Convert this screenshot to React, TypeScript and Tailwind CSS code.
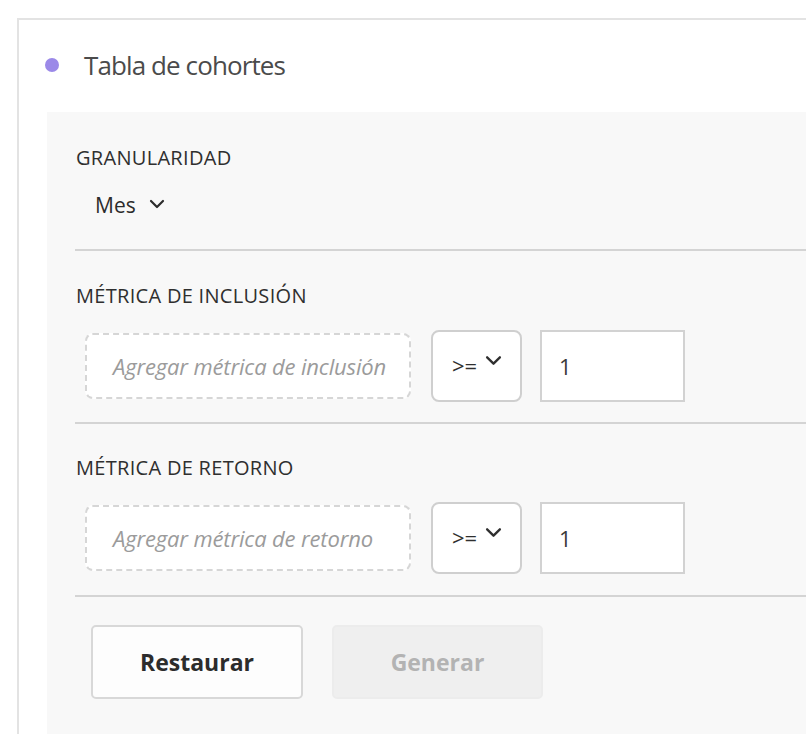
import { ReactNode } from 'react';

const FONT = { fontFamily: '"Open Sans", "Noto Sans", Arial, sans-serif' };

function Chevron({ className }: { className?: string }) {
    return (
        <svg className={className} viewBox="0 0 16 10" fill="none">
            <path d="M2 2l6 6 6-6" stroke="currentColor" strokeWidth="2.2" strokeLinecap="round" strokeLinejoin="round" />
        </svg>
    );
}

function SectionLabel({ children }: { children: ReactNode }) {
    return (
        <div className="pl-[1px] text-[20px] leading-6 text-[#2f2f2f] tracking-[0.3px]">
            {children}
        </div>
    );
}

function MetricRow({ placeholder }: { placeholder: string }) {
    return (
        <div className="flex items-center mt-[22px] h-[72px] pl-[10px]">
            <div className="flex items-center h-[66px] w-[326px] rounded-[8px] border-2 border-dashed border-[#d6d6d6] bg-white pl-[26px]">
                <span className="italic text-[22px] text-[#9b9b9b] tracking-[-0.15px]">{placeholder}</span>
            </div>
            <div className="flex items-center ml-[20px] h-[72px] w-[91px] rounded-[8px] border-2 border-[#cfcfcf] bg-white pl-[19px]">
                <span className="text-[22px] text-[#2f2f2f] -mt-[2px]">&gt;=</span>
                <Chevron className="w-[17px] h-[11px] ml-[8px] -mt-[12px] text-[#2f2f2f]" />
            </div>
            <div className="flex items-center ml-[18px] h-[72px] w-[145px] border-2 border-[#d2d2d2] bg-white pl-[17px]">
                <span className="text-[22px] text-[#3a3a3a]">1</span>
            </div>
        </div>
    );
}

export default function App() {
    return (
        <div className="w-[806px] h-[734px] overflow-hidden bg-white pt-[18px] pl-[17px]" style={FONT}>
            <div className="w-[820px] h-[740px] border-t-2 border-l-2 border-[#e3e3e3]">
                <div className="flex items-center h-[92px] pl-[26px] pb-[2px]">
                    <div className="w-[14px] h-[14px] rounded-full bg-[#9b89e8]" />
                    <h1 className="ml-[25px] text-[26px] text-[#4b4b4b] tracking-[-0.9px] font-normal">Tabla de cohortes</h1>
                </div>
                <div className="ml-[28px] h-[640px] bg-[#f8f8f8] pl-[28px] pt-[34px]">
                    <SectionLabel>GRANULARIDAD</SectionLabel>
                    <div className="flex items-center mt-[24px] pl-[20px] h-[24px]">
                        <span className="text-[21px] text-[#2c2c2c]">Mes</span>
                        <Chevron className="w-[16px] h-[10px] ml-[13px] -mt-[4px] text-[#2c2c2c]" />
                    </div>
                    <div className="mt-[31px] h-[2px] bg-[#d4d4d4]" />

                    <div className="mt-[33px]">
                        <SectionLabel>MÉTRICA DE INCLUSIÓN</SectionLabel>
                    </div>
                    <MetricRow placeholder="Agregar métrica de inclusión" />
                    <div className="mt-[20px] h-[2px] bg-[#d4d4d4]" />

                    <div className="mt-[32px]">
                        <SectionLabel>MÉTRICA DE RETORNO</SectionLabel>
                    </div>
                    <MetricRow placeholder="Agregar métrica de retorno" />
                    <div className="mt-[21px] h-[2px] bg-[#d4d4d4]" />

                    <div className="flex items-center gap-[29px] mt-[28px] pl-[16px]">
                        <button className="h-[74px] w-[212px] rounded-[5px] border-2 border-[#d8d8d8] bg-[#fdfdfd] text-[23px] font-bold text-[#2c2c2c]">
                            Restaurar
                        </button>
                        <button disabled className="h-[74px] w-[211px] rounded-[5px] border-2 border-[#ececec] bg-[#efefef] text-[23px] font-bold text-[#b3b3b3]">
                            Generar
                        </button>
                    </div>
                </div>
            </div>
        </div>
    );
}
